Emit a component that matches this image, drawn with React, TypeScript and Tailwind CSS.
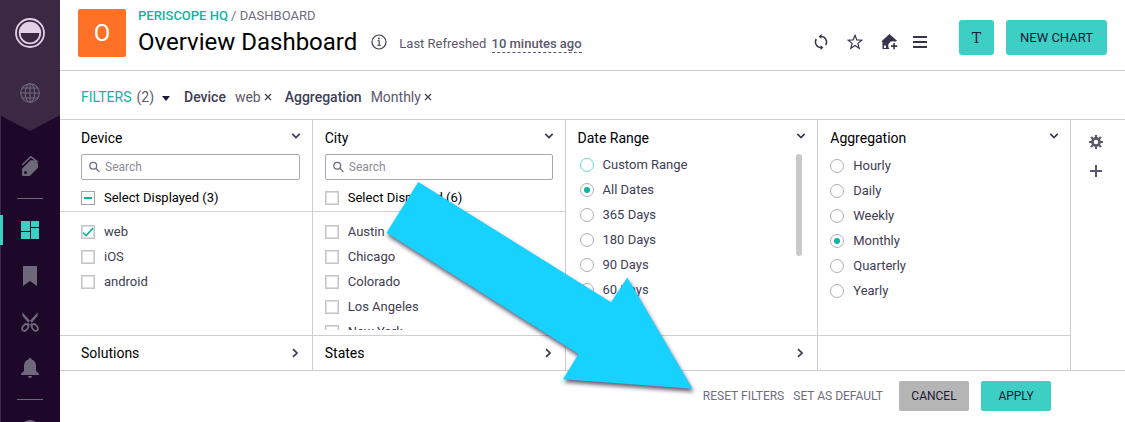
import type { ReactNode } from "react";

const devices = [
  { name: "web", checked: true },
  { name: "iOS", checked: false },
  { name: "android", checked: false },
];
const cities = [
  { name: "Austin", checked: false },
  { name: "Chicago", checked: false },
  { name: "Colorado", checked: false },
  { name: "Los Angeles", checked: false },
  { name: "New York", checked: false },
];
const dateRanges = ["All Dates", "365 Days", "180 Days", "90 Days", "60 Days"];
const aggregations = ["Hourly", "Daily", "Weekly", "Monthly", "Quarterly", "Yearly"];

function ChevronDown() {
  return (
    <svg width="10" height="8" viewBox="0 0 10 8" fill="none" stroke="#3c3950" strokeWidth="1.7">
      <path d="M1.3 1.8 5 5.5 8.7 1.8" />
    </svg>
  );
}

function ChevronRight() {
  return (
    <svg width="8" height="10" viewBox="0 0 8 10" fill="none" stroke="#3c3950" strokeWidth="1.7">
      <path d="M2 1.2 6 5 2 8.8" />
    </svg>
  );
}

function Sidebar() {
  return (
    <nav className="w-[60px] h-screen shrink-0 overflow-hidden bg-[#1d0829] shadow-[inset_1px_0_0_#3a2848] text-[#6e697a]">
      <div className="h-[131px] bg-[#3b2843] flex flex-col items-center pt-[18px] [clip-path:polygon(0_0,100%_0,100%_88%,50%_100%,0_88%)]">
        <a href="#home" aria-label="Home">
          <svg width="30" height="30" viewBox="0 0 30 30">
            <circle cx="15" cy="15" r="14" fill="none" stroke="#e3cfe6" strokeWidth="1.8" />
            <circle cx="15" cy="15" r="10.3" fill="none" stroke="#e3cfe6" strokeWidth="1.8" />
            <path d="M4.8 15a10.2 10.2 0 0 1 20.4 0z" fill="#e3cfe6" />
          </svg>
        </a>
        <a href="#spaces" aria-label="Spaces" className="mt-[35px]">
          <svg width="20" height="20" viewBox="0 0 20 20" fill="none" stroke="currentColor" strokeWidth="1.1">
            <circle cx="10" cy="10" r="9.3" />
            <ellipse cx="10" cy="10" rx="4.8" ry="9.3" />
            <path d="M10 .7v18.6M.7 10h18.6M2.2 5h15.6M2.2 15h15.6" />
          </svg>
        </a>
      </div>
      <div className="flex flex-col items-center">
        <a href="#tags" aria-label="Tags" className="flex items-center justify-center h-[46px] mt-3 w-full">
          <svg width="18" height="22" viewBox="0 0 18 22">
            <path
              fillRule="evenodd"
              d="M9.500 5.200h4.300L17 8.500v4.300L9.300 20.400a1.600 1.600 0 0 1-1.100.5H2.200A1.200 1.200 0 0 1 1 19.700v-6zM4.500 16a1.500 1.500 0 1 0 0 3 1.500 1.500 0 1 0 0-3z"
              fill="currentColor"
            />
            <path d="M1.200 10 9.800 1.800 17 7" fill="none" stroke="currentColor" strokeWidth="1.500" />
          </svg>
        </a>
        <hr className="w-[26px] mt-[9px] mb-2 border-[#6e697a]" />
        <a
          href="#dashboards"
          aria-label="Dashboards"
          className="flex items-center justify-center w-full h-[30px] my-2 border-l-3 pr-[3px] border-[#3dcfc4] text-[#3dcfc4]"
        >
          <svg width="18" height="18" viewBox="0 0 18 18" fill="currentColor">
            <path d="M0 0h9v10H0zM10 0h8v6h-8zM0 11h9v7H0zM10 7h8v11h-8z" />
          </svg>
        </a>
        <a href="#saved" aria-label="Saved" className="flex items-center justify-center w-full h-[46px]">
          <svg width="14" height="20" viewBox="0 0 14 20" fill="currentColor">
            <path d="M0 0h14v20l-7-5-7 5z" />
          </svg>
        </a>
        <a href="#snippets" aria-label="Snippets" className="flex items-center justify-center w-full h-[46px]">
          <svg width="18" height="20" viewBox="0 0 18 20">
            <path d="M1.300.3 12.200 12.300 10.200 14.200 1.500 4zM16.700.3 5.800 12.300 7.800 14.200 16.500 4z" fill="currentColor" />
            <g fill="none" stroke="currentColor" strokeWidth="1.800">
              <ellipse cx="4.200" cy="15.500" rx="2.500" ry="3.700" transform="rotate(38 4.200 15.500)" />
              <ellipse cx="13.800" cy="15.500" rx="2.500" ry="3.700" transform="rotate(-38 13.800 15.500)" />
            </g>
          </svg>
        </a>
        <a href="#alerts" aria-label="Alerts" className="flex items-center justify-center w-full h-[46px]">
          <svg width="18" height="20" viewBox="0 0 18 20" fill="currentColor">
            <path d="M9 0c1 0 1.600.7 1.600 1.600C13.800 2.400 15 5 15 8v5l3 2.800V17H0v-1.200L3 13V8c0-3 1.200-5.600 4.400-6.400C7.400.7 8 0 9 0zM7 18h4c0 1.200-.9 2-2 2s-2-.8-2-2z" />
          </svg>
        </a>
        <hr className="w-[26px] my-2 border-[#6e697a]" />
        <a href="#account" aria-label="Account" className="mt-3">
          <svg width="18" height="18" viewBox="0 0 18 18" fill="currentColor">
            <circle cx="9" cy="9" r="9" />
          </svg>
        </a>
      </div>
    </nav>
  );
}

function Header() {
  return (
    <header className="flex h-[71px] border-b border-[#cfcfd3] pl-[18px] pr-[18px]">
      <div className="size-12 mt-[9px] shrink-0 rounded-xs bg-[#ff7126] text-white text-2xl flex items-center justify-center">
        O
      </div>
      <div className="pl-3 pt-2">
        <p className="text-[13px] leading-4 text-[#6f6c7f]">
          <a href="#hq" className="font-medium text-[#12b2a5]">PERISCOPE HQ</a> / DASHBOARD
        </p>
        <div className="flex items-center">
          <h1 className="text-2xl leading-9 text-black">Overview Dashboard</h1>
          <button aria-label="Dashboard info" className="ml-[14px]">
            <svg width="16" height="16" viewBox="0 0 16 16" fill="none" stroke="#3c3950">
              <circle cx="8" cy="8" r="7" strokeWidth="1.200" />
              <path d="M6.500 6.800h1.700v4.500M6.300 11.300h3.600" strokeWidth="1.100" />
              <circle cx="7.900" cy="4.500" r=".9" fill="#3c3950" stroke="none" />
            </svg>
          </button>
          <p className="ml-3 pt-1 text-[13px] leading-4 text-[#5b586c]">
            Last Refreshed{" "}
            <a href="#refreshed" className="ml-0.5 pb-px font-medium border-b border-dashed border-[#5b586c]">
              10 minutes ago
            </a>
          </p>
        </div>
      </div>
      <div className="ml-auto flex items-start pt-5">
        <div className="flex items-center h-[43px] gap-[18px] text-[#38354b]">
          <button aria-label="Refresh">
            <svg width="16" height="16" viewBox="0 0 16 16" fill="none" stroke="currentColor" strokeWidth="1.400">
              <path d="M8 2.400A5.600 5.600 0 0 1 12.700 11M8 13.600A5.600 5.600 0 0 1 3.300 5" />
              <path d="M8.500 0v4.800L5.500 2.400zM7.500 11.200V16l3-2.400z" fill="currentColor" stroke="none" />
            </svg>
          </button>
          <button aria-label="Favorite">
            <svg width="16" height="16" viewBox="0 0 16 16" fill="none" stroke="currentColor" strokeWidth="1.200">
              <path d="m8 1.300 1.800 4.600 5 .3-3.900 3.200 1.300 4.900L8 11.500l-4.200 2.800 1.300-4.900L1.200 6.200l5-.3z" />
            </svg>
          </button>
          <button aria-label="Add to home">
            <svg width="17" height="16" viewBox="0 0 17 16" fill="currentColor">
              <path d="M8.500 0 16 6.800l-1.300.7H13A4.500 4.500 0 0 0 8.600 15H1.500V8.300L.5 7.200zM3 11.500V14h2v-2.500z" fillRule="evenodd" />
              <path d="M12.300 9h1.600v2.300h2.300v1.600h-2.300v2.300h-1.600v-2.300H10v-1.600h2.300z" />
            </svg>
          </button>
          <button aria-label="Menu" className="-ml-[3px]">
            <svg width="14" height="12" viewBox="0 0 14 12" fill="currentColor">
              <path d="M0 0h14v2H0zM0 5h14v2H0zM0 10h14v2H0z" />
            </svg>
          </button>
        </div>
        <button className="ml-8 size-[35px] rounded-[3px] bg-[#3dcfc4] font-['DejaVu_Serif',serif] text-sm text-[#1c1a33]">
          T
        </button>
        <button className="ml-3 w-[101px] h-[35px] rounded-[3px] bg-[#3dcfc4] text-[13px] text-[#1c1a33]">NEW CHART</button>
      </div>
    </header>
  );
}

function FilterTag({ name, value }: { name: string; value: string }) {
  return (
    <span className="flex items-center">
      <span className="font-medium text-[#403d54]">{name}</span>
      <span className="ml-[9px]">{value}</span>
      <button aria-label={`Remove ${name} filter`} className="ml-[3px]">
        <svg width="8" height="8" viewBox="0 0 8 8" stroke="#403d54" strokeWidth="1.200">
          <path d="m1 1 6 6M7 1 1 7" />
        </svg>
      </button>
    </span>
  );
}

function FilterBar() {
  return (
    <div className="flex items-center h-[49px] pt-1 border-b border-[#cfcfd3] pl-[21px] text-sm text-[#5b586c]">
      <button className="flex items-center">
        <span className="text-[#12b2a5]">FILTERS</span>
        <span className="ml-[5px]">(2)</span>
        <svg width="8" height="5" viewBox="0 0 8 5" className="ml-2 mt-0.5" fill="#1c1a33">
          <path d="M0 0h8L4 5z" />
        </svg>
      </button>
      <div className="flex gap-[13px] ml-[14px]">
        <FilterTag name="Device" value="web" />
        <FilterTag name="Aggregation" value="Monthly" />
      </div>
    </div>
  );
}

function Checkbox({ label, checked, partial }: { label: string; checked?: boolean; partial?: boolean }) {
  return (
    <label className={partial === undefined ? "flex items-center h-[25px] gap-[9px]" : "flex items-center h-[25px] gap-[9px] text-black"}>
      <span className="grid place-items-center">
        <input
          type="checkbox"
          defaultChecked={checked}
          className={
            partial
              ? "appearance-none col-start-1 row-start-1 size-[14px] border border-[#a3a1ae]"
              : "appearance-none col-start-1 row-start-1 size-[14px] border border-[#c6c5cc] shadow-[inset_0_0_0_1px_#dcdce1]"
          }
        />
        {checked && (
          <svg width="12" height="10" viewBox="0 0 12 10" className="col-start-1 row-start-1 pointer-events-none">
            <path d="m1 5.500 3.200 3L11 1.200" fill="none" stroke="#12b2a5" strokeWidth="1.700" />
          </svg>
        )}
        {partial && <span className="col-start-1 row-start-1 w-2 h-0.5 bg-[#12b2a5] pointer-events-none" />}
      </span>
      {label}
    </label>
  );
}

function Radio({ group, label, checked, accent }: { group: string; label: string; checked?: boolean; accent?: boolean }) {
  return (
    <label className={accent ? "flex items-center h-6 gap-[9px]" : "flex items-center h-[25px] gap-[9px]"}>
      <input
        type="radio"
        name={group}
        defaultChecked={checked}
        className={
          accent
            ? "appearance-none size-[14px] rounded-full border border-[#6cd9cf]"
            : "appearance-none size-[14px] rounded-full border border-[#b0afb9] grid place-content-center before:size-1.5 before:rounded-full checked:before:bg-[#12b2a5]"
        }
      />
      {label}
    </label>
  );
}

function Panel({ title, first, children }: { title: string; first?: boolean; children: ReactNode }) {
  return (
    <section className={first ? "h-[216px] border-b border-r border-[#cfcfd3] [--pad:21px]" : "h-[216px] border-b border-r border-[#cfcfd3] [--pad:12px]"}>
      <button className="flex justify-between w-full pl-(--pad) pr-[11px] pt-2 h-8 text-sm text-black">
        {title}
        <span className="pt-1">
          <ChevronDown />
        </span>
      </button>
      {children}
    </section>
  );
}

function CheckList({ total, partial, items }: { total: number; partial: boolean; items: { name: string; checked: boolean }[] }) {
  return (
    <>
      <div className="pl-(--pad) pr-3 pt-0.5 pb-px border-b border-[#cfcfd3]">
        <label className="flex items-center h-[26px] px-[7px] border border-[#a9a8b0] rounded-xs">
          <svg width="12" height="12" viewBox="0 0 12 12" fill="none" stroke="#6f6c7f" strokeWidth="1.400">
            <circle cx="4.600" cy="4.600" r="3.700" />
            <path d="m7.300 7.300 4 4" />
          </svg>
          <input
            type="text"
            aria-label="Search"
            placeholder="Search"
            className="w-full min-w-0 ml-[5px] text-xs outline-none placeholder:text-[#8e8c9a]"
          />
        </label>
        <div className="mt-[5px]">
          <Checkbox label={`Select Displayed (${total})`} partial={partial} />
        </div>
      </div>
      <div className="pl-(--pad) pt-[7px] h-[118px] overflow-hidden">
        {items.map((item) => (
          <Checkbox key={item.name} label={item.name} checked={item.checked} />
        ))}
      </div>
    </>
  );
}

function CollapsedPanel({ title, first }: { title?: string; first?: boolean }) {
  return (
    <button
      aria-label={title ?? "Expand filter"}
      className={
        first
          ? "flex items-center justify-between h-[35px] pl-[21px] pr-[13px] border-b border-r border-[#cfcfd3] text-sm text-black"
          : "flex items-center justify-between h-[35px] pl-3 pr-[13px] border-b border-r border-[#cfcfd3] text-sm text-black"
      }
    >
      <span>{title}</span>
      <ChevronRight />
    </button>
  );
}

function Filters() {
  return (
    <div className="flex text-[13px] text-[#403d54]">
      <div className="grid grid-cols-4 flex-1">
        <Panel title="Device" first>
          <CheckList total={3} partial items={devices} />
        </Panel>
        <Panel title="City">
          <CheckList total={6} partial={false} items={cities} />
        </Panel>
        <Panel title="Date Range">
          <div className="flex justify-between pl-[14px] pr-[15px]">
            <div className="pt-px">
              <Radio group="date" label="Custom Range" accent />
              {dateRanges.map((range) => (
                <Radio key={range} group="date" label={range} checked={range === "All Dates"} />
              ))}
            </div>
            <div className="w-1.5 h-[102px] mt-0.5 rounded-full bg-[#c9c9c9]" />
          </div>
        </Panel>
        <Panel title="Aggregation">
          <div className="pl-3 pt-px">
            {aggregations.map((item) => (
              <Radio key={item} group="aggregation" label={item} checked={item === "Monthly"} />
            ))}
          </div>
        </Panel>
        <CollapsedPanel title="Solutions" first />
        <CollapsedPanel title="States" />
        <CollapsedPanel />
        <div className="border-b border-r border-[#cfcfd3]" />
      </div>
      <div className="w-[54px] flex flex-col items-center gap-4 pt-[15px] pr-1 border-b border-[#cfcfd3] text-[#5b586c]">
        <button aria-label="Filter settings">
          <svg width="14" height="14" viewBox="0 0 14 14" stroke="currentColor">
            <circle cx="7" cy="7" r="3.600" fill="none" strokeWidth="2.600" />
            <path d="M7 0v3M7 11v3M0 7h3M11 7h3M2.050 2.050l2 2M9.950 9.950l2 2M11.950 2.050l-2 2M4.050 9.950l-2 2" strokeWidth="2.200" />
          </svg>
        </button>
        <button aria-label="Add filter">
          <svg width="12" height="12" viewBox="0 0 12 12" stroke="currentColor" strokeWidth="2">
            <path d="M6 0v12M0 6h12" />
          </svg>
        </button>
      </div>
    </div>
  );
}

function Arrow() {
  return (
    <svg
      width="320"
      height="224"
      viewBox="380 176 320 224"
      className="absolute left-[380px] top-[176px] pointer-events-none drop-shadow-[1px_3px_2px_rgba(30,20,50,0.7)]"
    >
      <path d="M418.300 182 611 302.300 627.300 277.500 692.500 388.800 563 379.200 578.500 354 386.500 232.700z" fill="#17d1ff" />
    </svg>
  );
}

export default function App() {
  return (
    <div className="relative flex min-h-screen overflow-hidden bg-white font-[Roboto,sans-serif]">
      <Sidebar />
      <main className="flex-1 min-w-0">
        <Header />
        <FilterBar />
        <Filters />
        <footer className="flex items-center justify-end pt-[10px] pr-[74px] text-xs text-[#6f6c7f]">
          <button>RESET FILTERS</button>
          <button className="ml-[9px]">SET AS DEFAULT</button>
          <button className="ml-4 w-[70px] h-[30px] rounded-xs bg-[#b5b5b5] text-[#1c1a33]">CANCEL</button>
          <button className="ml-3 w-[70px] h-[30px] rounded-xs bg-[#3dcfc4] text-[#1c1a33]">APPLY</button>
        </footer>
      </main>
      <Arrow />
    </div>
  );
}
